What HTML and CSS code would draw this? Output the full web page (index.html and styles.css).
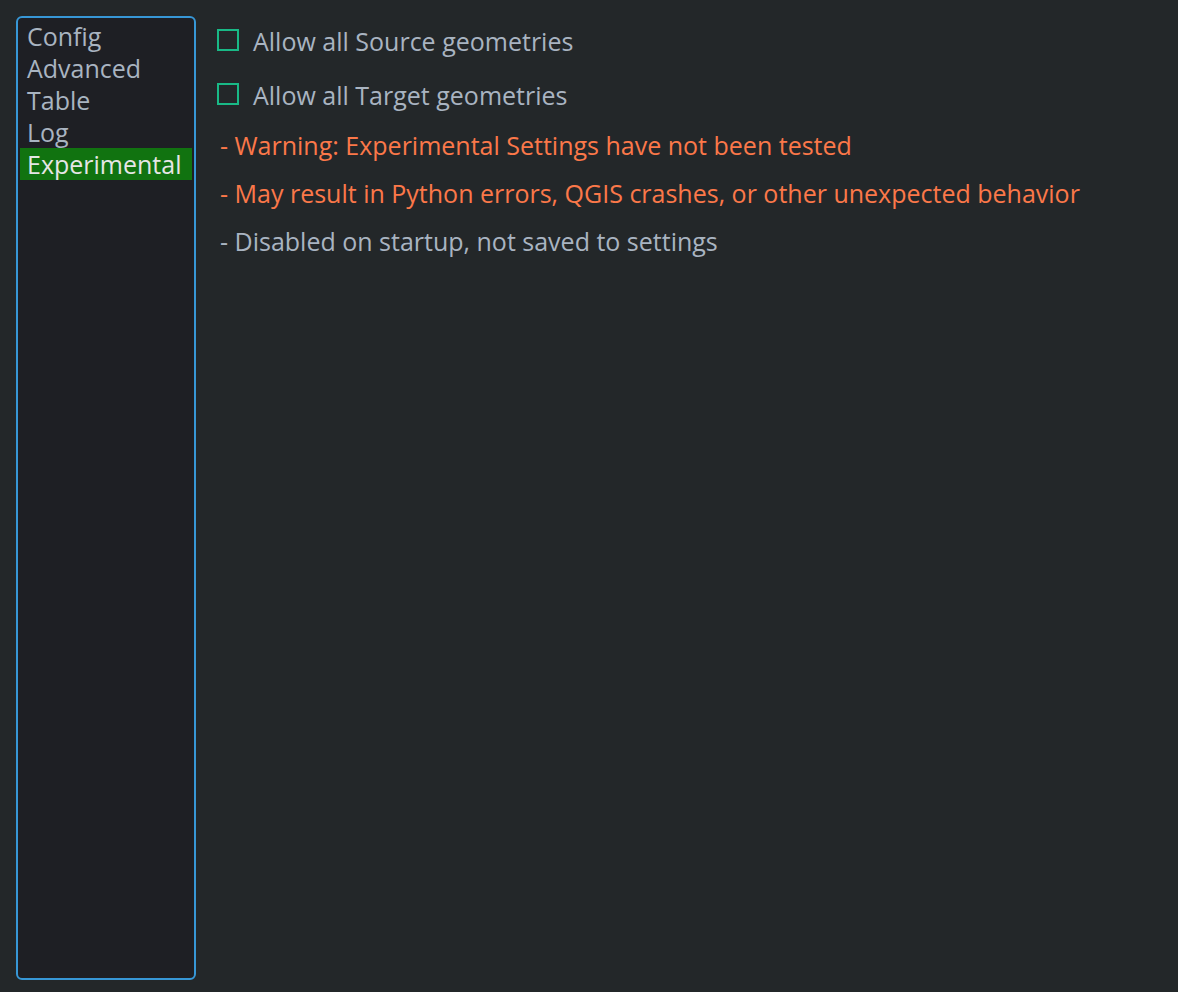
FILE: index.html
```html
<!DOCTYPE html>
<html>
<head>
<meta charset="utf-8">
<link rel="stylesheet" href="styles.css">
</head>
<body>
<div class="app">
  <nav class="sidebar">
    <div class="item">Config</div>
    <div class="item">Advanced</div>
    <div class="item">Table</div>
    <div class="item">Log</div>
    <div class="item selected">Experimental</div>
  </nav>
  <main class="content">
    <label class="check"><span class="box"></span><span>Allow all Source geometries</span></label>
    <label class="check"><span class="box"></span><span>Allow all Target geometries</span></label>
    <p class="note warn">- Warning: Experimental Settings have not been tested</p>
    <p class="note warn">- May result in Python errors, QGIS crashes, or other unexpected behavior</p>
    <p class="note">- Disabled on startup, not saved to settings</p>
  </main>
</div>
</body>
</html>
```

FILE: styles.css
```css
html, body {
  margin: 0;
  padding: 0;
  background: #232729;
  height: 100%;
}
body {
  font-family: "Open Sans", "Noto Sans", sans-serif;
  font-size: 25px;
  color: #a9b4c1;
}
.app {
  display: flex;
  padding: 16px;
  height: 964px;
  gap: 21px;
}
.sidebar {
  box-sizing: border-box;
  width: 180px;
  height: 964px;
  border: 2px solid #3797d6;
  border-radius: 6px;
  background: #1e1f24;
  padding: 2px 2px;
  display: flex;
  flex-direction: column;
}
.item {
  height: 32px;
  line-height: 32px;
  padding-left: 7px;
  white-space: nowrap;
}
.item.selected {
  background: #117310;
  color: #e6e6e6;
}
.content {
  display: flex;
  flex-direction: column;
  padding-top: 13px;
}
.check {
  display: flex;
  align-items: center;
  gap: 14px;
  height: 22px;
  margin-bottom: 32px;
}
.check span:last-child {
  position: relative;
  top: 1px;
}
.box {
  box-sizing: border-box;
  width: 22px;
  height: 22px;
  border: 2px solid #19b986;
}
.note {
  margin: 0;
  padding-left: 3px;
  height: 48px;
  line-height: 48px;
  white-space: nowrap;
}
.check + .check { margin-bottom: 16px; }
.warn {
  color: #fb7849;
}
```
